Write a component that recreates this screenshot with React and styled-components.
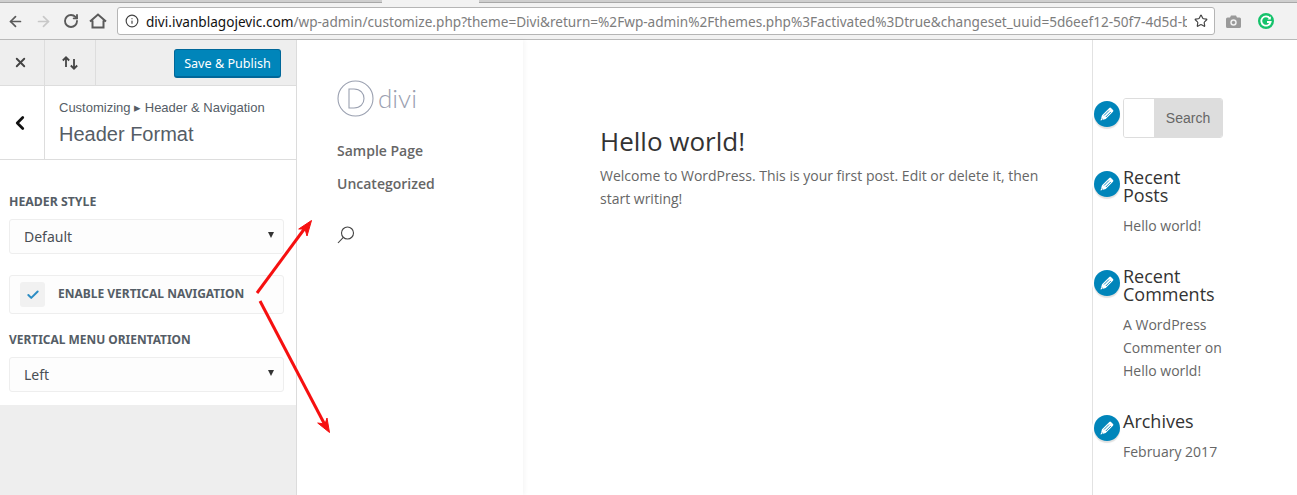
import styled, { createGlobalStyle } from "styled-components";
import { ArrowLeft, ArrowRight, RotateCw, Info, Star, X, ChevronLeft, Check } from "lucide-react";

const GlobalStyle = createGlobalStyle`
  html, body { margin: 0; padding: 0; background: #fff; }
  body { width: 1297px; height: 495px; overflow: hidden; font-family: "Open Sans", sans-serif; }
  * { box-sizing: border-box; }
`;

const Page = styled.div`
  position: relative;
  width: 1297px;
  height: 495px;
  display: flex;
  flex-direction: column;
  overflow: hidden;
`;

const TabStrip = styled.div`
  height: 3px;
  flex: none;
  display: flex;
  background: #f2f2f2;
`;

const TabEdge = styled.span`
  width: ${(p) => p.$w}px;
  flex: ${(p) => (p.$w ? "none" : 1)};
  background: ${(p) => (p.$active ? "#f2f2f2" : "#cfcfcf")};
  border-bottom: 1px solid ${(p) => (p.$active ? "#f2f2f2" : "#a8a8a8")};
`;

const Toolbar = styled.div`
  height: 37px;
  flex: none;
  display: flex;
  align-items: center;
  background: #f2f2f2;
  border-bottom: 1px solid #b9b9b9;
  padding-left: 7px;
`;

const NavButton = styled.span`
  width: ${(p) => p.$w}px;
  display: flex;
  align-items: center;
  color: ${(p) => p.$color || "#5a5a5a"};
`;

const UrlBar = styled.div`
  width: 1098px;
  height: 28px;
  display: flex;
  align-items: center;
  background: #fff;
  border: 1px solid #b5b5b5;
  border-radius: 3px;
  padding-left: 7px;
  font-family: "Noto Sans", sans-serif;
  font-size: 13.6px;
  color: #7d7d7d;
  overflow: hidden;
`;

const UrlText = styled.span`
  margin-left: 7px;
  width: 1041px;
  flex: none;
  white-space: nowrap;
  overflow: hidden;
`;

const UrlHost = styled.span`
  color: #111;
`;

const UrlStar = styled.span`
  margin-left: 7px;
  display: flex;
  color: #444;
`;

const ExtIcons = styled.div`
  display: flex;
  align-items: center;
  margin-left: 11px;
  gap: 17px;
`;

const Body = styled.div`
  flex: 1;
  display: flex;
  min-height: 0;
`;

const Panel = styled.aside`
  width: 297px;
  flex: none;
  display: flex;
  flex-direction: column;
  background: #eee;
  border-right: 1px solid #ddd;
`;

const PanelTop = styled.div`
  height: 46px;
  display: flex;
  background: #eee;
  border-bottom: 1px solid #ddd;
`;

const TopButton = styled.div`
  width: ${(p) => p.$w}px;
  display: flex;
  align-items: center;
  justify-content: center;
  padding-right: ${(p) => p.$nudge || 0}px;
  border-right: 1px solid #ddd;
  color: #444;
`;

const PublishButton = styled.button`
  width: 107px;
  height: 29px;
  margin: 9px 15px 0 auto;
  border: 1px solid #006799;
  border-bottom-width: 2px;
  border-radius: 3px;
  background: #0085ba;
  color: #fff;
  font-family: "Noto Sans", sans-serif;
  font-size: 12.6px;
  padding: 0;
`;

const SectionHead = styled.div`
  height: 74px;
  display: flex;
  background: #fff;
  border-bottom: 1px solid #ddd;
`;

const BackButton = styled.div`
  width: 45px;
  flex: none;
  display: flex;
  align-items: center;
  justify-content: center;
  padding-right: 4px;
  border-right: 1px solid #ddd;
  color: #111;
`;

const HeadText = styled.div`
  padding: 13px 0 0 14px;
  font-family: "Liberation Sans", sans-serif;
  color: #555d66;
`;

const Crumb = styled.div`
  font-size: 13px;
  line-height: 18px;
`;

const HeadTitle = styled.div`
  font-size: 20px;
  line-height: 26px;
  margin-top: 4px;
`;

const Controls = styled.div`
  height: 245px;
  flex: none;
  background: #fff;
  padding: 34px 12px 0 9px;
`;

const ControlLabel = styled.div`
  font-family: "Noto Sans", sans-serif;
  font-weight: 700;
  font-size: ${(p) => p.$size}px;
  line-height: 16px;
  color: #555d66;
  margin-bottom: 9px;
`;

const SelectBox = styled.div`
  height: 35px;
  display: flex;
  align-items: center;
  justify-content: space-between;
  padding: 0 9px 0 14px;
  background: #fdfdfd;
  border: 1px solid #eee;
  border-radius: 3px;
  font-family: "Noto Sans", sans-serif;
  font-size: 14px;
  color: #4a4f55;
`;

const Caret = styled.span`
  width: 0;
  height: 0;
  margin-top: -3px;
  border-left: 3px solid transparent;
  border-right: 3px solid transparent;
  border-top: 6px solid #333;
`;

const CheckRow = styled.div`
  height: 39px;
  margin: 21px 0 18px;
  display: flex;
  align-items: center;
  padding-left: 10px;
  background: #fdfdfd;
  border: 1px solid #eee;
  border-radius: 3px;
  font-family: "Noto Sans", sans-serif;
  font-weight: 700;
  font-size: 12px;
  color: #555d66;
`;

const CheckBox = styled.span`
  width: 25px;
  height: 25px;
  margin-right: 13px;
  display: flex;
  align-items: center;
  justify-content: center;
  background: #f1f1f1;
  border-radius: 3px;
  color: #2b8cc4;
`;

const CheckLabel = styled.span`
  padding-bottom: 3px;
`;

const Preview = styled.main`
  flex: 1;
  display: flex;
  background: #fff;
`;

const SideNav = styled.nav`
  width: 226px;
  flex: none;
  padding: 40px 0 0 40px;
  box-shadow: 2px 0 4px rgba(0, 0, 0, 0.04);
`;

const Logo = styled.div`
  display: flex;
  align-items: center;
  gap: 4px;
  height: 37px;
  margin-bottom: 24px;
`;

const LogoWord = styled.span`
  font-family: "Lato", sans-serif;
  font-weight: 300;
  font-size: 26px;
  color: #9aa0b0;
  line-height: 37px;
`;

const NavLink = styled.div`
  font-weight: 600;
  font-size: 14px;
  line-height: 19px;
  color: #666;
  margin-bottom: 14px;
`;

const SearchGlyph = styled.div`
  margin-top: 33px;
  line-height: 0;
`;

const Content = styled.article`
  width: 570px;
  flex: none;
  padding: 83px 0 0 77px;
  border-right: 1px solid #e2e2e2;
`;

const PostTitle = styled.h1`
  margin: 0;
  font-weight: 400;
  font-size: 26px;
  line-height: 36px;
  color: #333;
`;

const PostBody = styled.p`
  margin: 5px 0 0;
  width: 445px;
  font-size: 14px;
  line-height: 23px;
  color: #666;
`;

const Widgets = styled.section`
  flex: 1;
  padding: 58px 0 0 30px;
`;

const Widget = styled.div`
  position: relative;
  width: 100px;
  margin-bottom: ${(p) => p.$gap}px;
`;

const PenBadge = styled.span`
  position: absolute;
  left: -29px;
  top: ${(p) => p.$top}px;
  width: 26px;
  height: 26px;
  border-radius: 50%;
  background: #0085ba;
  color: #fff;
  display: flex;
  align-items: center;
  justify-content: center;
  box-shadow: 0 2px 1px rgba(0, 0, 0, 0.12), 0 0 0 2px #fff;
`;

const SearchWidget = styled.div`
  display: flex;
  height: 40px;
  border: 1px solid #ddd;
  border-radius: 3px;
  overflow: hidden;
`;

const SearchField = styled.div`
  width: 30px;
  background: #fff;
`;

const SearchBtn = styled.div`
  flex: 1;
  display: flex;
  align-items: center;
  justify-content: center;
  background: #ddd;
  font-family: "Liberation Sans", sans-serif;
  font-size: 14px;
  color: #666;
`;

const WidgetTitle = styled.h4`
  margin: 0 0 10px;
  font-weight: 400;
  font-size: 18px;
  line-height: 18px;
  color: #333;
`;

const WidgetText = styled.div`
  font-size: 14px;
  line-height: 23px;
  color: #666;
`;

const ArrowOverlay = styled.svg`
  position: absolute;
  left: 0;
  top: 0;
  pointer-events: none;
`;

function HomeIcon() {
  return (
    <svg width="18" height="16" viewBox="0 0 18 16" fill="none" stroke="#5a5a5a" strokeWidth="2">
      <path d="M1 8.500 9 1.500l8 7M3.500 7.500V14.500h11V7.500" />
    </svg>
  );
}

function CameraIcon() {
  return (
    <svg width="15" height="13" viewBox="0 0 15 13">
      <path d="M1.500 2.500H4L5 .5h5l1 2h2.500A1.500 1.500 0 0 1 15 4v7.500a1.500 1.500 0 0 1-1.500 1.500h-12A1.500 1.500 0 0 1 0 11.500V4a1.500 1.500 0 0 1 1.500-1.500z" fill="#9a9a9a" />
      <circle cx="7.500" cy="7.500" r="3.200" fill="#f2f2f2" />
      <circle cx="7.500" cy="7.500" r="1.700" fill="#9a9a9a" />
    </svg>
  );
}

function GrammarlyIcon() {
  return (
    <svg width="16" height="16" viewBox="0 0 16 16" fill="none">
      <circle cx="8" cy="8" r="8" fill="#15c26b" />
      <path d="M11.800 5.200A4.700 4.700 0 1 0 12.600 9H9" stroke="#fff" strokeWidth="1.800" />
      <path d="M12.800 3.200v3.300H9.500z" fill="#fff" />
    </svg>
  );
}

function Pen() {
  return (
    <svg width="16" height="16" viewBox="0 0 16 16">
      <path d="M1.500 14.500 3 9.300 10.300 2a1.200 1.200 0 0 1 1.700 0l2 2a1.200 1.200 0 0 1 0 1.700L6.700 13z" fill="#fff" />
      <path d="M5 9.500 10 4.500M6.800 11 11.800 6M2.700 12.500l1.200 1" stroke="#0085ba" strokeWidth="0.9" fill="none" />
    </svg>
  );
}

function ArrowsUpDown() {
  return (
    <svg width="18" height="14" viewBox="0 0 18 14" fill="none" stroke="#444" strokeWidth="1.800">
      <path d="M5 11V1.500M1.800 4.500 5 1.300l3.200 3.200M13 3v9.500M9.800 9.500 13 12.700l3.200-3.200" />
    </svg>
  );
}

function DiviLogo() {
  return (
    <svg width="37" height="37" viewBox="0 0 37 37" fill="none" stroke="#9aa0b0" strokeWidth="1.100">
      <circle cx="18.500" cy="18.500" r="17.500" />
      <path d="M12 9h5c6.500 0 10 4.300 10 9.500S23.500 28 17 28h-5z" />
    </svg>
  );
}

function SearchLens() {
  return (
    <svg width="18" height="18" viewBox="0 0 18 18" fill="none" stroke="#444" strokeWidth="1.100">
      <circle cx="10.500" cy="7" r="6" />
      <path d="M6.300 11.300 1 17" />
    </svg>
  );
}

function Arrows() {
  return (
    <ArrowOverlay width="1297" height="495" viewBox="0 0 1297 495" fill="none" stroke="#f61010" strokeWidth="3">
      <path d="M257 293 305 228" />
      <path d="M260 301 325 425" />
      <path d="M311.500 220.500 298.700 229 305 229 307 236z" fill="#f61010" strokeWidth="1" />
      <path d="M329.500 432.500 327 418 325 424 317.700 423z" fill="#f61010" strokeWidth="1" />
    </ArrowOverlay>
  );
}

export default function App() {
  return (
    <Page>
      <GlobalStyle />
      <TabStrip>
        <TabEdge $w={382} />
        <TabEdge $w={97} $active />
        <TabEdge />
      </TabStrip>
      <Toolbar>
        <NavButton $w={28}><ArrowLeft size={17} strokeWidth={2.4} /></NavButton>
        <NavButton $w={28} $color="#c8c8c8"><ArrowRight size={17} strokeWidth={2.4} /></NavButton>
        <NavButton $w={26}><RotateCw size={16} strokeWidth={2.8} /></NavButton>
        <NavButton $w={28}><HomeIcon /></NavButton>
        <UrlBar>
          <Info size={14} color="#444" strokeWidth={2} />
          <UrlText>
            <UrlHost>divi.ivanblagojevic.com</UrlHost>
            /wp-admin/customize.php?theme=Divi&amp;return=%2Fwp-admin%2Fthemes.php%3Factivated%3Dtrue&amp;changeset_uuid=5d6eef12-50f7-4d5d-b
          </UrlText>
          <UrlStar><Star size={14} strokeWidth={2} /></UrlStar>
        </UrlBar>
        <ExtIcons>
          <CameraIcon />
          <GrammarlyIcon />
        </ExtIcons>
      </Toolbar>
      <Body>
        <Panel>
          <PanelTop>
            <TopButton $w={45} $nudge={3}><X size={15} strokeWidth={3} /></TopButton>
            <TopButton $w={51}><ArrowsUpDown /></TopButton>
            <PublishButton>Save &amp; Publish</PublishButton>
          </PanelTop>
          <SectionHead>
            <BackButton><ChevronLeft size={22} strokeWidth={3} /></BackButton>
            <HeadText>
              <Crumb>Customizing ▸ Header &amp; Navigation</Crumb>
              <HeadTitle>Header Format</HeadTitle>
            </HeadText>
          </SectionHead>
          <Controls>
            <ControlLabel $size={12.3}>HEADER STYLE</ControlLabel>
            <SelectBox>Default<Caret /></SelectBox>
            <CheckRow>
              <CheckBox><Check size={14} strokeWidth={3.4} /></CheckBox>
              <CheckLabel>ENABLE VERTICAL NAVIGATION</CheckLabel>
            </CheckRow>
            <ControlLabel $size={11.95}>VERTICAL MENU ORIENTATION</ControlLabel>
            <SelectBox>Left<Caret /></SelectBox>
          </Controls>
        </Panel>
        <Preview>
          <SideNav>
            <Logo>
              <DiviLogo />
              <LogoWord>divi</LogoWord>
            </Logo>
            <NavLink>Sample Page</NavLink>
            <NavLink>Uncategorized</NavLink>
            <SearchGlyph><SearchLens /></SearchGlyph>
          </SideNav>
          <Content>
            <PostTitle>Hello world!</PostTitle>
            <PostBody>Welcome to WordPress. This is your first post. Edit or delete it, then start writing!</PostBody>
          </Content>
          <Widgets>
            <Widget $gap={30}>
              <PenBadge $top={3}><Pen /></PenBadge>
              <SearchWidget>
                <SearchField />
                <SearchBtn>Search</SearchBtn>
              </SearchWidget>
            </Widget>
            <Widget $gap={30}>
              <PenBadge $top={3}><Pen /></PenBadge>
              <WidgetTitle>Recent Posts</WidgetTitle>
              <WidgetText>Hello world!</WidgetText>
            </Widget>
            <Widget $gap={30}>
              <PenBadge $top={3}><Pen /></PenBadge>
              <WidgetTitle>Recent Comments</WidgetTitle>
              <WidgetText>A WordPress Commenter on Hello world!</WidgetText>
            </Widget>
            <Widget $gap={0}>
              <PenBadge $top={3}><Pen /></PenBadge>
              <WidgetTitle>Archives</WidgetTitle>
              <WidgetText>February 2017</WidgetText>
            </Widget>
          </Widgets>
        </Preview>
      </Body>
      <Arrows />
    </Page>
  );
}
